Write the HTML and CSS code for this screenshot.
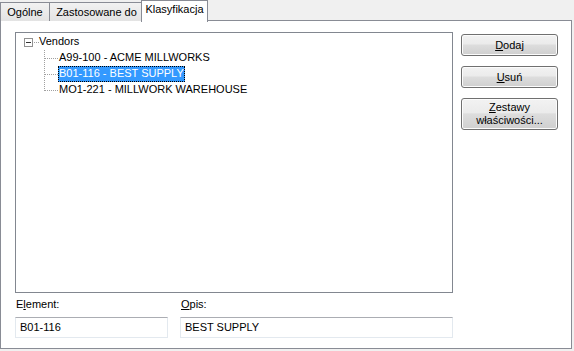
FILE: index.html
```html
<!DOCTYPE html>
<html lang="pl">
<head>
  <meta charset="UTF-8" />
  <title>Klasyfikacja</title>
  <link rel="stylesheet" href="styles.css">
</head>
<body>
  <div class="tabs">
    <div class="tab">Ogólne</div>
    <div class="tab">Zastosowane do</div>
    <div class="tab active">Klasyfikacja</div>
  </div>
  <div class="panel">
    <div class="left">
      <div class="tree">
        <div class="node root">
          <span class="toggle"><svg width="9" height="9" viewBox="0 0 9 9"><rect x="0.5" y="0.5" width="8" height="8" fill="#fff" stroke="#919191"/><path d="M2 4.5h5" stroke="#333" stroke-width="1"/></svg></span>
          <span class="dots-h short"></span>
          <span class="label">Vendors</span>
        </div>
        <div class="children">
          <div class="node child"><span class="dots-h"></span><span class="label">A99-100 - ACME MILLWORKS</span></div>
          <div class="node child"><span class="dots-h"></span><span class="label selected">B01-116 - BEST SUPPLY</span></div>
          <div class="node child last"><span class="dots-h"></span><span class="label">MO1-221 - MILLWORK WAREHOUSE</span></div>
        </div>
      </div>
      <div class="fields">
        <div class="field f-element">
          <label>E<u>l</u>ement:</label>
          <div class="input">B01-116</div>
        </div>
        <div class="field f-opis">
          <label><u>O</u>pis:</label>
          <div class="input">BEST SUPPLY</div>
        </div>
      </div>
    </div>
    <div class="buttons">
      <button><u>D</u>odaj</button>
      <button><u>U</u>suń</button>
      <button class="tall"><u>Z</u>estawy<br>właściwości...</button>
    </div>
  </div>
</body>
</html>
```

FILE: styles.css
```css
:root {
  --face: #f0f0f0;
  --edge: #898c95;
  --text: #000;
  --sel: #3399ff;
}
* { box-sizing: border-box; margin: 0; padding: 0; }
body {
  background: var(--face);
  font-family: 'Liberation Sans', Tahoma, sans-serif;
  font-size: 11px;
  color: var(--text);
  width: 574px;
  height: 351px;
  overflow: hidden;
}
.tabs {
  display: flex;
  align-items: flex-end;
  height: 21px;
  position: relative;
  z-index: 1;
}
.tab {
  height: 19px;
  padding-top: 2px;
  border: 1px solid var(--edge);
  border-bottom: none;
  background: linear-gradient(#f2f2f2, #e3e3e3);
  margin-right: -1px;
  line-height: 15px;
  text-align: center;
  white-space: nowrap;
}
.tab:first-child { width: 50px; }
.tab:nth-child(2) { width: 95px; }
.tab.active {
  height: 22px;
  background: #fff;
  width: 67px;
  margin-left: -2px;
  margin-bottom: -1px;
  padding-top: 1px;
}
.panel {
  width: 572px;
  height: 329px;
  margin-top: -1px;
  border: 1px solid var(--edge);
  background: #fff;
  display: flex;
  padding: 11px 0 0 14px;
  gap: 8px;
}
.left {
  width: 438px;
  display: flex;
  flex-direction: column;
}
.tree {
  height: 261px;
  border: 1px solid #828790;
  padding: 1px 0 0 8px;
}
.node {
  display: flex;
  align-items: center;
  height: 16px;
  white-space: nowrap;
}
.toggle { width: 9px; height: 9px; display: block; }
.toggle svg { display: block; }
.dots-h {
  display: inline-block;
  width: 12px;
  height: 1px;
  border-top: 1px dotted #a0a0a0;
  margin-top: 1px;
}
.dots-h.short { width: 5px; margin-left: 1px; }
.label { padding: 0 1px; line-height: 15px; height: 16px; }
.root .label { padding-left: 0; }
.children {
  margin-left: 20px;
  border-left: 1px dotted #a0a0a0;
  height: 41px;
}
.child .dots-h { width: 13px; }
.label.selected {
  background: var(--sel);
  color: #fff;
  outline: 1px dotted #000;
  outline-offset: -1px;
}
.fields {
  display: flex;
  gap: 12px;
  margin-top: 4px;
}
.field label {
  display: block;
  height: 20px;
  line-height: 14px;
  padding-left: 1px;
}
.field u, button u { text-decoration: underline; }
.input {
  height: 21px;
  border: 1px solid #e3e9ef;
  border-top-color: #abadb3;
  padding: 2px 4px;
  line-height: 15px;
}
.f-element { width: 153px; }
.f-opis { width: 273px; }
.buttons {
  display: flex;
  flex-direction: column;
  gap: 10px;
  padding-top: 2px;
}
button {
  width: 97px;
  height: 22px;
  font-family: inherit;
  font-size: 11px;
  color: #000;
  border: 1px solid #707070;
  border-radius: 3px;
  background: linear-gradient(#f2f2f2 0%, #ebebeb 45%, #dddddd 50%, #cfcfcf 100%);
  box-shadow: inset 0 0 0 1px #fcfcfc;
  line-height: 13px;
}
button.tall { height: 32px; }
```
